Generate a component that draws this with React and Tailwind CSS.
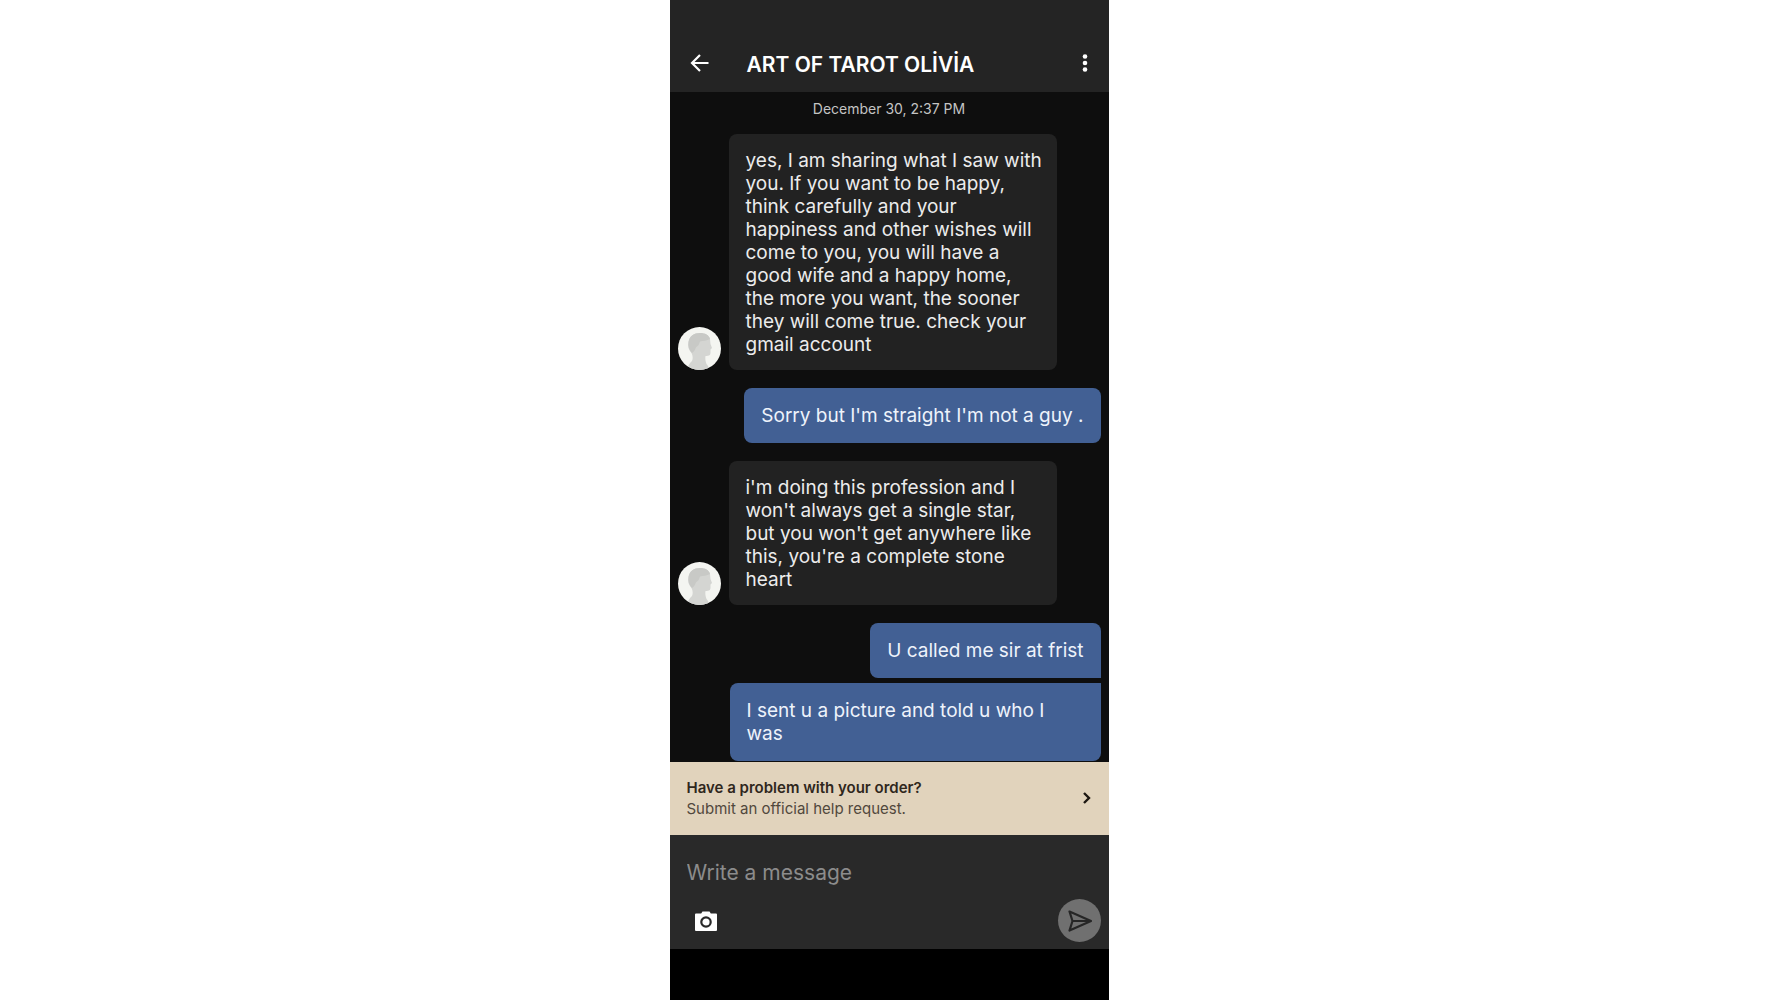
import { useState } from 'react'

const groups = [
  {
    from: 'seller',
    messages: [
      [
        'yes, I am sharing what I saw with',
        'you. If you want to be happy,',
        'think carefully and your',
        'happiness and other wishes will',
        'come to you, you will have a',
        'good wife and a happy home,',
        'the more you want, the sooner',
        'they will come true. check your',
        'gmail account',
      ],
    ],
  },
  { from: 'me', messages: [["Sorry but I'm straight I'm not a guy ."]] },
  {
    from: 'seller',
    messages: [
      [
        "i'm doing this profession and I",
        "won't always get a single star,",
        "but you won't get anywhere like",
        "this, you're a complete stone",
        'heart',
      ],
    ],
  },
  {
    from: 'me',
    messages: [['U called me sir at frist'], ['I sent u a picture and told u who I', 'was']],
  },
]

export default function App() {
  return (
    <div className="min-h-screen bg-white font-['Inter',sans-serif]">
      <div className="mx-auto flex min-h-screen w-full max-w-[439px] flex-col bg-black">
        <Header />
        <main className="flex-1 bg-[#0e0e0e] px-2 pt-2">
          <p className="text-center text-sm leading-[18px] text-[#c4c4c4]">December 30, 2:37 PM</p>
          <div className="mt-4 flex flex-col gap-[18px]">
            {groups.map((group, i) => (
              <MessageGroup key={i} group={group} />
            ))}
          </div>
        </main>
        <HelpBanner />
        <Composer />
        <div className="h-[51px]" />
      </div>
    </div>
  )
}

function Header() {
  return (
    <header className="flex items-end bg-[#242424] px-4 pt-12 pb-[14px] text-white">
      <button aria-label="Back" className="flex h-[30px] w-7 items-center justify-center">
        <svg width="20" height="20" viewBox="0 0 20 20" fill="none" stroke="currentColor" strokeWidth="2.2">
          <path d="M18.5 10H2.5M10 2 2 10l8 8" />
        </svg>
      </button>
      <h1 className="ml-[33px] flex-1 text-[21px] leading-[26px] font-semibold">ART OF TAROT OLİVİA</h1>
      <button aria-label="More options" className="flex h-[30px] w-4 items-center justify-center">
        <svg width="6" height="20" viewBox="0 0 6 20" fill="currentColor">
          <circle cx="3" cy="3.500" r="2.300" />
          <circle cx="3" cy="10" r="2.300" />
          <circle cx="3" cy="16.500" r="2.300" />
        </svg>
      </button>
    </header>
  )
}

function MessageGroup({ group }) {
  if (group.from === 'seller') {
    return (
      <div className="flex items-end gap-2">
        <Avatar />
        <div className="w-[328px] rounded-lg bg-[#222222] px-[17px] pt-[15px] pb-[14px] text-[19px] leading-[23px] whitespace-nowrap text-[#ececec]">
          <Lines lines={group.messages[0]} />
        </div>
      </div>
    )
  }

  const stacked = group.messages.length > 1
  return (
    <div className="flex flex-col items-end gap-[5px]">
      {group.messages.map((lines, i) => {
        let corners = 'rounded-lg'
        if (stacked) corners = i === 0 ? 'rounded-lg rounded-br-none' : 'rounded-lg rounded-tr-none'
        return (
          <div
            key={i}
            className={`${corners} ${lines.length > 1 ? 'w-[371px]' : ''} bg-[#426094] px-[17px] py-4 text-[19px] leading-[23px] whitespace-nowrap text-[#eef3fb]`}
          >
            <Lines lines={lines} />
          </div>
        )
      })}
    </div>
  )
}

function Lines({ lines }) {
  return (
    <p>
      {lines.map((line) => (
        <span key={line} className="block">{line}</span>
      ))}
    </p>
  )
}

function Avatar() {
  return (
    <svg className="shrink-0 rounded-full" width="43" height="43" viewBox="0 0 43 43" aria-hidden="true">
      <rect width="43" height="43" fill="#f4f5f1" />
      <path
        d="M9 43c1-5 3-7 5-9 1-2 1-5-.5-8-3-3-4-7-3-11C11.500 9 16 6 22 6c5 0 9 2 10 6l.5 5 1.500 4-1.500 1.500v3c0 2.500-1 3.500-5 3.500-.5 3 0 5 1 8 1.500 2 2.500 3 3 6z"
        fill="#d4d5d2"
      />
      <path
        d="M14 26c-3-3-4-7-3.500-11C11.500 9 16 6 22 6c5 0 9 2 10 6-3 2-7 1.500-10 2.500-1 2-1 4-3 5-2 1-1 4-5 6.500z"
        fill="#c8c9c6"
      />
    </svg>
  )
}

function HelpBanner() {
  return (
    <a href="#help" className="flex items-center justify-between bg-[#e1d3bc] pt-[15px] pr-[18px] pb-4 pl-[17px]">
      <span className="text-[#51483d]">
        <span className="block text-[15px] leading-[21px] font-semibold text-[#2f271d]">Have a problem with your order?</span>
        <span className="block text-[15px] leading-[21px]">Submit an official help request.</span>
      </span>
      <svg width="8" height="12" viewBox="0 0 8 12" fill="none" stroke="#1d1812" strokeWidth="2.4">
        <path d="M1 1 6 6l-5 5" />
      </svg>
    </a>
  )
}

function Composer() {
  const [text, setText] = useState('')

  return (
    <form className="bg-[#292929] pt-6 pr-2 pb-[7px] pl-[17px]" onSubmit={(e) => e.preventDefault()}>
      <input
        aria-label="Write a message"
        placeholder="Write a message"
        value={text}
        onChange={(e) => setText(e.target.value)}
        className="block h-7 w-full bg-transparent text-[21px] text-white outline-none placeholder:text-[#8c8c8c]"
      />
      <div className="mt-3 flex items-center justify-between">
        <button type="button" aria-label="Add a photo" className="ml-2">
          <svg width="22" height="20" viewBox="0 0 22 20" fill="none">
            <path d="M1 2.500h5.200L7.500.5h7l1.300 2H21q1 0 1 1V19q0 1-1 1H1q-1 0-1-1V3.500q0-1 1-1z" fill="#fff" />
            <circle cx="11" cy="11" r="4.700" stroke="#292929" strokeWidth="2.200" />
          </svg>
        </button>
        <button aria-label="Send" className="flex size-[43px] items-center justify-center rounded-full bg-[#707070]">
          <svg width="25" height="22" viewBox="0 0 25 22" fill="none" stroke="#262626" strokeWidth="2.2" strokeLinejoin="round">
            <path d="M2.500 1.500 24 11 2.500 20.500 5.500 11zM5.500 11H23" />
          </svg>
        </button>
      </div>
    </form>
  )
}
